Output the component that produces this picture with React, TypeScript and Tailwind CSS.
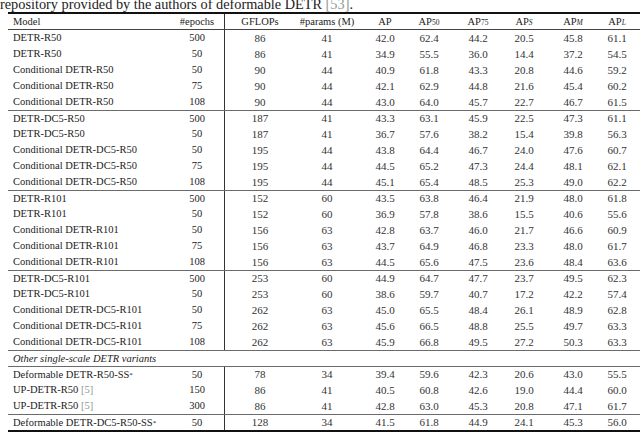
import React from 'react';

type Row = { name: React.ReactNode; vals: string[] };

const Ref = ({ n }: { n: string }) => <span className="text-[#8f9a96]">[{n}]</span>;

const Star = () => <sup className="text-[7px] relative -top-[1px]">*</sup>;

const groups: Row[][] = [
    [
        { name: 'DETR-R50', vals: ['500', '86', '41', '42.0', '62.4', '44.2', '20.5', '45.8', '61.1'] },
        { name: 'DETR-R50', vals: ['50', '86', '41', '34.9', '55.5', '36.0', '14.4', '37.2', '54.5'] },
        { name: 'Conditional DETR-R50', vals: ['50', '90', '44', '40.9', '61.8', '43.3', '20.8', '44.6', '59.2'] },
        { name: 'Conditional DETR-R50', vals: ['75', '90', '44', '42.1', '62.9', '44.8', '21.6', '45.4', '60.2'] },
        { name: 'Conditional DETR-R50', vals: ['108', '90', '44', '43.0', '64.0', '45.7', '22.7', '46.7', '61.5'] },
    ],
    [
        { name: 'DETR-DC5-R50', vals: ['500', '187', '41', '43.3', '63.1', '45.9', '22.5', '47.3', '61.1'] },
        { name: 'DETR-DC5-R50', vals: ['50', '187', '41', '36.7', '57.6', '38.2', '15.4', '39.8', '56.3'] },
        { name: 'Conditional DETR-DC5-R50', vals: ['50', '195', '44', '43.8', '64.4', '46.7', '24.0', '47.6', '60.7'] },
        { name: 'Conditional DETR-DC5-R50', vals: ['75', '195', '44', '44.5', '65.2', '47.3', '24.4', '48.1', '62.1'] },
        { name: 'Conditional DETR-DC5-R50', vals: ['108', '195', '44', '45.1', '65.4', '48.5', '25.3', '49.0', '62.2'] },
    ],
    [
        { name: 'DETR-R101', vals: ['500', '152', '60', '43.5', '63.8', '46.4', '21.9', '48.0', '61.8'] },
        { name: 'DETR-R101', vals: ['50', '152', '60', '36.9', '57.8', '38.6', '15.5', '40.6', '55.6'] },
        { name: 'Conditional DETR-R101', vals: ['50', '156', '63', '42.8', '63.7', '46.0', '21.7', '46.6', '60.9'] },
        { name: 'Conditional DETR-R101', vals: ['75', '156', '63', '43.7', '64.9', '46.8', '23.3', '48.0', '61.7'] },
        { name: 'Conditional DETR-R101', vals: ['108', '156', '63', '44.5', '65.6', '47.5', '23.6', '48.4', '63.6'] },
    ],
    [
        { name: 'DETR-DC5-R101', vals: ['500', '253', '60', '44.9', '64.7', '47.7', '23.7', '49.5', '62.3'] },
        { name: 'DETR-DC5-R101', vals: ['50', '253', '60', '38.6', '59.7', '40.7', '17.2', '42.2', '57.4'] },
        { name: 'Conditional DETR-DC5-R101', vals: ['50', '262', '63', '45.0', '65.5', '48.4', '26.1', '48.9', '62.8'] },
        { name: 'Conditional DETR-DC5-R101', vals: ['75', '262', '63', '45.6', '66.5', '48.8', '25.5', '49.7', '63.3'] },
        { name: 'Conditional DETR-DC5-R101', vals: ['108', '262', '63', '45.9', '66.8', '49.5', '27.2', '50.3', '63.3'] },
    ],
];

const variants: Row[][] = [
    [
        { name: <>Deformable DETR-R50-SS<Star /></>, vals: ['50', '78', '34', '39.4', '59.6', '42.3', '20.6', '43.0', '55.5'] },
        { name: <>UP-DETR-R50 <Ref n="5" /></>, vals: ['150', '86', '41', '40.5', '60.8', '42.6', '19.0', '44.4', '60.0'] },
        { name: <>UP-DETR-R50 <Ref n="5" /></>, vals: ['300', '86', '41', '42.8', '63.0', '45.3', '20.8', '47.1', '61.7'] },
    ],
    [
        { name: <>Deformable DETR-DC5-R50-SS<Star /></>, vals: ['50', '128', '34', '41.5', '61.8', '44.9', '24.1', '45.3', '56.0'] },
    ],
];

// widths after the epochs column, chosen so every value sits on its column centre
const widths = ['w-[70px]', 'w-[64px]', 'w-[52px]', 'w-[36px]', 'w-[62px]', 'w-[30px]', 'w-[68px]', 'w-[20px]'];

const cell = 'flex items-center justify-center whitespace-nowrap';

function DataRow({ row, first }: { row: Row; first: boolean }) {
    return (
        <div className={`flex h-4 ${first ? 'border-t border-[#6b6b6b]' : ''}`}>
            <div className="w-[162px] pl-[5px] flex items-center whitespace-nowrap">
                <span>{row.name}</span>
            </div>
            <div className={`w-[55px] border-r border-[#333] ${cell}`}>{row.vals[0]}</div>
            {row.vals.slice(1).map((v, i) => (
                <div key={i} className={`${widths[i]} ${cell} text-[11px] text-[#333]`}>
                    {v}
                </div>
            ))}
        </div>
    );
}

const Sub = ({ children, italic }: { children: React.ReactNode; italic?: boolean }) => (
    <sub className={`text-[7.5px] relative top-[1px] ${italic ? 'italic' : ''}`}>{children}</sub>
);

export default function App() {
    return (
        <div className="w-[640px] h-[434px] overflow-hidden bg-white text-[#1c1c1c] font-['Liberation_Serif',serif]">
            <div className="h-[12px] flow-root">
                <div className="-mt-[4px] text-[14.3px] leading-[16px] whitespace-nowrap">
                    repository provided by the authors of deformable DETR <Ref n="53" />.
                </div>
            </div>

            <div className="ml-[8px] text-[10.5px] border-b-2 border-[#111]">
                {/* header */}
                <div className="flex h-[18px] border-t-2 border-b border-t-[#111] border-b-[#444]">
                    <div className="w-[162px] pl-[5px] flex items-center">Model</div>
                    <div className={`w-[55px] border-r border-[#333] ${cell}`}>#epochs</div>
                    <div className={`${widths[0]} ${cell}`}>GFLOPs</div>
                    <div className={`${widths[1]} ${cell}`}>#params (M)</div>
                    <div className={`${widths[2]} ${cell}`}>AP</div>
                    <div className={`${widths[3]} ${cell}`}>AP<Sub>50</Sub></div>
                    <div className={`${widths[4]} ${cell}`}>AP<Sub>75</Sub></div>
                    <div className={`${widths[5]} ${cell}`}>AP<Sub italic>S</Sub></div>
                    <div className={`${widths[6]} ${cell}`}>AP<Sub italic>M</Sub></div>
                    <div className={`${widths[7]} ${cell}`}>AP<Sub italic>L</Sub></div>
                </div>

                {groups.map((g, gi) =>
                    g.map((r, ri) => <DataRow key={`${gi}-${ri}`} row={r} first={gi > 0 && ri === 0} />)
                )}

                <div className="flex h-4 items-center pl-[5px] italic border-t border-[#6b6b6b]">
                    Other single-scale DETR variants
                </div>

                {variants.map((g, gi) => g.map((r, ri) => <DataRow key={`v${gi}-${ri}`} row={r} first={ri === 0} />))}
            </div>
        </div>
    );
}
